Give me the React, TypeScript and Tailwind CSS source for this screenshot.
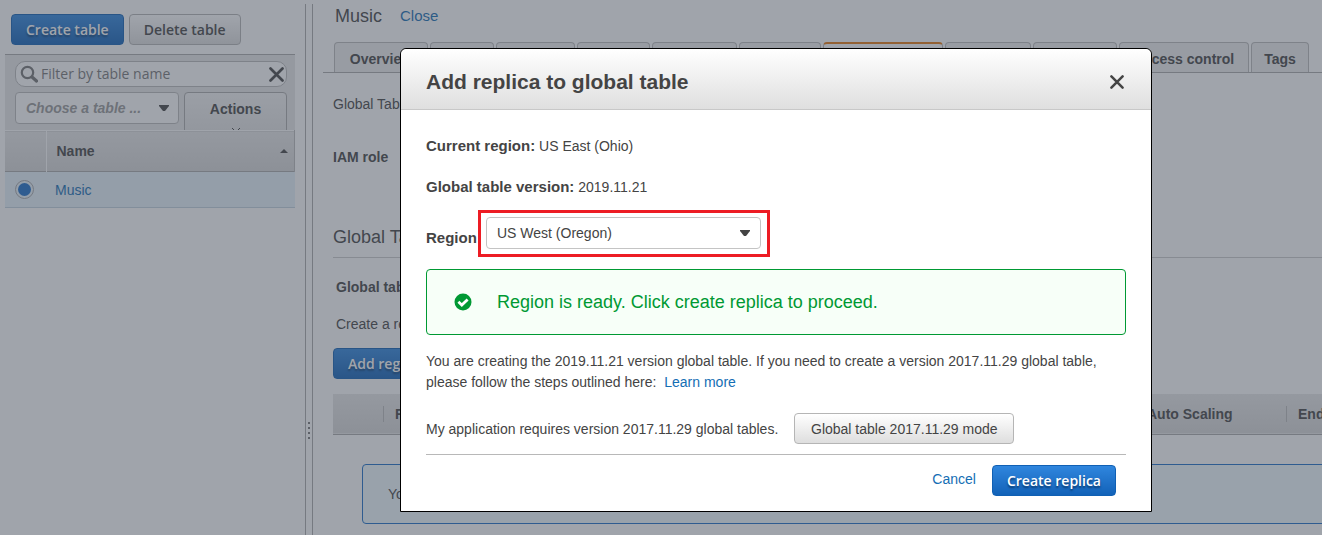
import { useState } from 'react';

const tabs = [
  { label: 'Overview', width: 'w-[94px]' },
  { label: 'Items', width: 'w-16' },
  { label: 'Metrics', width: 'w-[79px]' },
  { label: 'Alarms', width: 'w-[73px]' },
  { label: 'Capacity', width: 'w-[85px]' },
  { label: 'Indexes', width: 'w-[82px]' },
  { label: 'Global Tables', width: 'w-[120px]' },
  { label: 'Backups', width: 'w-[86px]' },
  { label: 'Triggers', width: 'w-[84px]' },
  { label: 'Access control', width: 'w-[130px]' },
  { label: 'Tags', width: 'w-[58px]' },
];

const primaryButton =
  "h-[31px] rounded border border-[#1060b4] bg-linear-to-b from-[#2f86de] to-[#1262b8] px-3.5 font-['Open_Sans',sans-serif] text-sm font-semibold text-white text-shadow-[0_2px_2px_#0a3b70] whitespace-nowrap";

const plainButton =
  'h-[31px] rounded border border-[#b5b5b5] bg-linear-to-b from-white to-[#dedede] px-3.5 text-sm whitespace-nowrap';

function Caret({ className }: { className: string }) {
  return (
    <svg viewBox="0 0 10 6" className={className} aria-hidden="true">
      <path d="M0 0h10v1L6 6H4L0 1z" fill="currentColor" />
    </svg>
  );
}

function Cross({ className }: { className: string }) {
  return (
    <svg viewBox="0 0 14 14" className={className} aria-hidden="true">
      <path d="M1.4 1.4l11.2 11.2M12.6 1.4L1.4 12.6" stroke="currentColor" strokeWidth="2.5" strokeLinecap="round" fill="none" />
    </svg>
  );
}

function Sidebar() {
  const [filter, setFilter] = useState('');

  return (
    <aside className="w-[305px] shrink-0 pt-3.5 pr-2.5 pl-[5px]">
      <div className="flex gap-[5px] pl-1.5">
        <button className={primaryButton}>Create table</button>
        <button className={`${plainButton} font-['Open_Sans',sans-serif] font-semibold`}>Delete table</button>
      </div>

      <div className="mt-[9px] h-[76px] overflow-hidden border-t border-[#aaa] bg-[#e8e8e8] px-2.5 pt-1.5 pr-2">
        <div className="flex h-[26px] items-center rounded-[10px] border border-[#bbb] bg-white pr-0.5 pl-1">
          <svg viewBox="0 0 18 18" className="size-[18px] shrink-0 text-[#777]" aria-hidden="true">
            <circle cx="7.5" cy="7.5" r="5.7" fill="none" stroke="currentColor" strokeWidth="2.2" />
            <path d="M12 12l4.5 4" stroke="currentColor" strokeWidth="3.2" strokeLinecap="round" />
          </svg>
          <input
            aria-label="Filter by table name"
            placeholder="Filter by table name"
            value={filter}
            onChange={(e) => setFilter(e.target.value)}
            className="min-w-0 grow pl-[3px] font-['Open_Sans',sans-serif] text-sm outline-none placeholder:text-[#777]"
          />
          <button aria-label="Clear filter" onClick={() => setFilter('')}>
            <Cross className="size-[15px]" />
          </button>
        </div>
        <div className="mt-[5px] flex items-start gap-[5px]">
          <div className="relative w-[164px]">
            <select
              aria-label="Table group"
              className="h-8 w-full appearance-none truncate rounded border border-[#bbb] bg-white pr-8 pl-2.5 text-sm font-bold text-[#999] italic"
            >
              <option>Choose a table ...</option>
            </select>
            <Caret className="pointer-events-none absolute top-[13px] right-2.5 h-1.5 w-2.5" />
          </div>
          <button className="flex h-14 grow flex-col items-center rounded border border-[#aaa] bg-linear-to-b from-[#f4f4f4] to-[#dedede] pt-1.5 text-sm font-bold">
            Actions
            <svg viewBox="0 0 10 6" className="mt-2 h-1.5 w-2.5" aria-hidden="true">
              <path d="M1 1l4 4 4-4" stroke="currentColor" fill="none" />
            </svg>
          </button>
        </div>
      </div>

      <table className="w-full table-fixed text-left text-sm">
        <thead>
          <tr className="h-[41px] border-t border-b border-t-white border-b-[#aaa] bg-linear-to-b from-[#e8e8e8] to-[#d8d8d8]">
            <th aria-label="Selected" className="w-[41px] border-r border-white" />
            <th className="border-r border-[#bbb] px-2.5">
              <span className="flex items-center justify-between">
                Name
                <svg viewBox="0 0 8 4" className="-mr-1 h-1 w-2" aria-hidden="true">
                  <path d="M0 4l4-4 4 4z" fill="currentColor" />
                </svg>
              </span>
            </th>
          </tr>
        </thead>
        <tbody>
          <tr className="h-9 border-b border-[#c3d3df] bg-[#e6f2fb]">
            <td>
              <input
                type="radio"
                name="table"
                aria-label="Music"
                defaultChecked
                className="ml-2.5 block size-[19px] appearance-none rounded-full border border-[#aaa] bg-[#1d6fc9] bg-clip-content p-0.5"
              />
            </td>
            <td className="pl-[9px]">
              <a href="#music" className="text-[#146eb4]">Music</a>
            </td>
          </tr>
        </tbody>
      </table>
    </aside>
  );
}

function Splitter() {
  return (
    <div className="mt-1 flex w-2 shrink-0 flex-col items-center border-x border-[#aaa]">
      <div className="grow-13" />
      <div className="flex flex-col gap-[3px]">
        {[0, 1, 2, 3].map((dot) => (
          <span key={dot} className="size-0.5 bg-[#777]" />
        ))}
      </div>
      <div className="grow-3" />
    </div>
  );
}

function TableDetails() {
  return (
    <main className="min-w-0 grow overflow-hidden">
      <div className="flex h-8 items-center gap-[18px] pl-[22px]">
        <h1 className="text-lg">Music</h1>
        <a href="#tables" className="text-[15px] text-[#146eb4]">Close</a>
      </div>

      <nav className="mt-2.5 ml-2.5 flex h-[31px] gap-0.5 border-b border-[#aaa] pl-[11px]">
        {tabs.map(({ label, width }) => (
          <a
            key={label}
            href={`#${label}`}
            className={`shrink-0 rounded-t border border-b-0 border-[#bbb] pt-1.5 text-center text-sm font-bold whitespace-nowrap ${width} ${
              label === 'Global Tables' ? 'border-t-2 border-t-[#e47911] bg-white' : 'bg-[#eee]'
            }`}
          >
            {label}
          </a>
        ))}
      </nav>

      <div className="pt-[21px] pl-5 text-sm">
        <p>Global Tables</p>
        <p className="mt-[33px] font-bold">IAM role</p>
        <h2 className="mt-14 border-b border-[#ccc] pb-1.5 text-lg">Global Tables</h2>
        <p className="mt-[19px] pl-[3px] font-bold">Global table regions</p>
        <p className="mt-[17px] pl-[3px]">Create a replica of this table</p>
        <button className={`${primaryButton} mt-3.5`}>Add region</button>

        <table className="mt-[15px] w-[1200px] table-fixed text-left">
          <thead>
            <tr className="h-10 border-b border-[#aaa] bg-linear-to-b from-[#e8e8e8] to-[#d8d8d8]">
              <th aria-label="Selected" className="w-[50px]" />
              <th className="w-[400px]"><span className="border-l border-[#bbb] pl-[11px]">Region</span></th>
              <th className="w-[352px]"><span className="border-l border-[#bbb] pl-[11px]">Status</span></th>
              <th className="w-[151px]"><span className="border-l border-[#bbb] pl-[11px]">Auto Scaling</span></th>
              <th><span className="border-l border-[#bbb] pl-[11px]">Endpoint</span></th>
            </tr>
          </thead>
        </table>

        <div className="mt-[29px] -mr-1 ml-[29px] flex h-[60px] items-center rounded border border-[#1d6fc9] bg-[#f0fbff] pl-[25px]">
          You have no replicas in this global table.
        </div>
      </div>
    </main>
  );
}

function AddReplicaDialog() {
  return (
    <div
      role="dialog"
      aria-labelledby="dialog-title"
      className="w-[752px] rounded-t-md border border-black bg-white text-sm"
    >
      <header className="flex h-[61px] items-center justify-between rounded-t-md border-b border-[#c8c8c8] bg-linear-to-b from-white to-[#dfdfdf] pt-1.5 pr-[27px] pl-[25px]">
        <h2 id="dialog-title" className="text-[21px] font-bold">Add replica to global table</h2>
        <button aria-label="Close dialog">
          <Cross className="size-3.5" />
        </button>
      </header>

      <div className="px-[25px] pt-[26px]">
        <p><b className="text-[15px] leading-5">Current region:</b> US East (Ohio)</p>
        <p className="mt-[21px]"><b className="text-[15px] leading-5">Global table version:</b> 2019.11.21</p>

        <div className="mt-[13px] flex items-center">
          <label htmlFor="region" className="w-[52px] pt-2 text-[15px] leading-5 font-bold">Region</label>
          <div className="relative w-[292px] border-3 border-[#ed1c24] px-[5px] pt-1 pb-[5px]">
            <select
              id="region"
              className="block h-8 w-[275px] appearance-none rounded border border-[#c4c4c4] bg-white pl-2.5"
            >
              <option>US West (Oregon)</option>
            </select>
            <Caret className="pointer-events-none absolute top-[17px] right-[17px] h-1.5 w-2.5" />
          </div>
        </div>

        <div role="status" className="mt-3 flex h-[66px] items-center gap-[25px] rounded border border-[#009933] bg-[#f7fff8] pl-[27px] text-lg text-[#009933]">
          <svg viewBox="0 0 18 18" className="size-[18px]" aria-hidden="true">
            <circle cx="9" cy="9" r="8.5" fill="currentColor" />
            <path d="M4.4 8.8l3.4 3.2 5.8-5.6" stroke="#fff" strokeWidth="2.8" fill="none" />
          </svg>
          Region is ready. Click create replica to proceed.
        </div>

        <p className="mt-4 leading-[21px]">
          You are creating the 2019.11.21 version global table. If you need to create a version 2017.11.29 global table,
          please follow the steps outlined here:{' '}
          <a href="#learn-more" className="ml-1 text-[#146eb4]">Learn more</a>
        </p>

        <div className="mt-5 flex items-center gap-4 border-b border-[#b8b8b8] pb-2.5">
          My application requires version 2017.11.29 global tables.
          <button className={`${plainButton} min-w-[220px]`}>Global table 2017.11.29 mode</button>
        </div>

        <footer className="flex items-center justify-end gap-4 pt-2.5 pr-2.5 pb-[15px]">
          <button className="pb-1 text-[#146eb4]">Cancel</button>
          <button className={primaryButton}>Create replica</button>
        </footer>
      </div>
    </div>
  );
}

export default function App() {
  return (
    <div className="relative flex h-screen overflow-hidden bg-white font-['Liberation_Sans',Arial,sans-serif] text-[#444]">
      <Sidebar />
      <Splitter />
      <TableDetails />
      <div className="absolute inset-0 flex items-start justify-center bg-[#414957]/50 pt-12 pl-[230px]">
        <AddReplicaDialog />
      </div>
    </div>
  );
}
